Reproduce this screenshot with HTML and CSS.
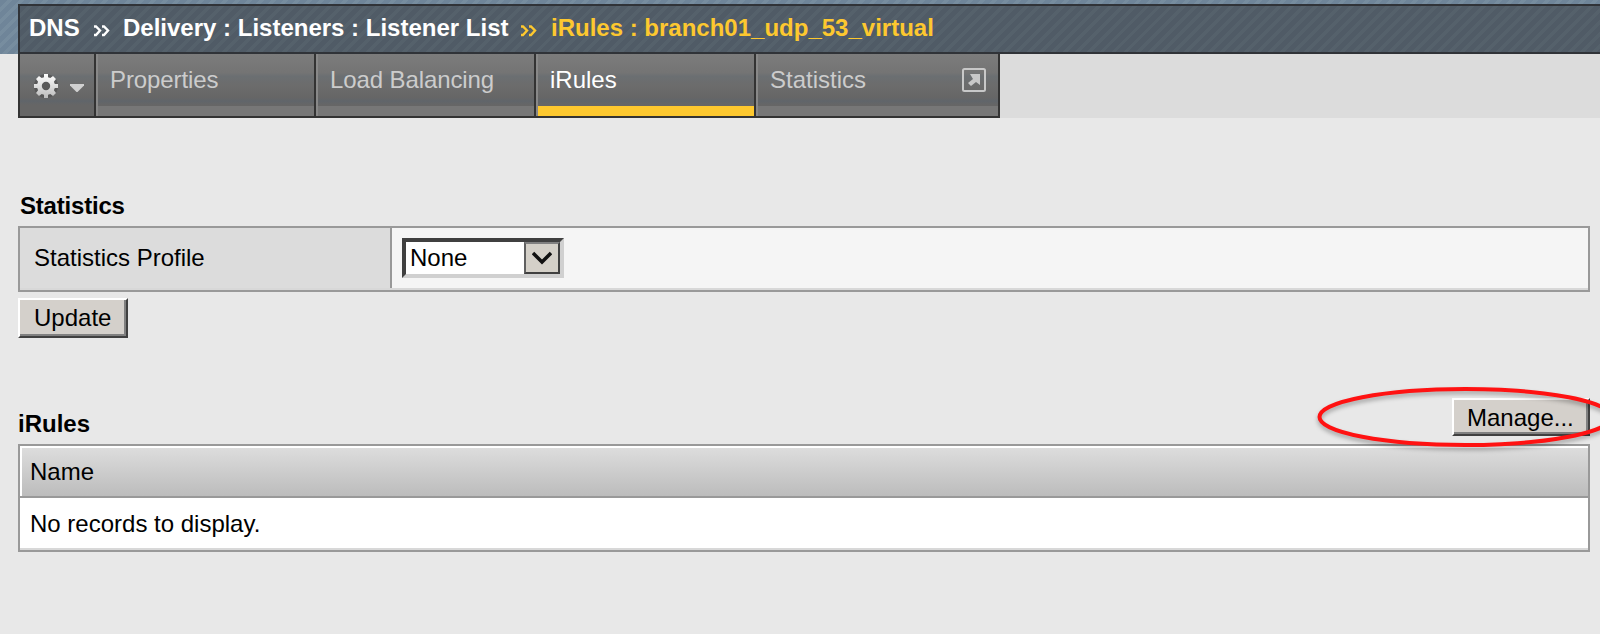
FILE: index.html
```html
<!DOCTYPE html>
<html lang="en">
<head>
<meta charset="utf-8">
<title>iRules : branch01_udp_53_virtual</title>
<link rel="stylesheet" href="styles.css">
</head>
<body>
<header class="masthead">
  <div class="crumbs">
    <span class="crumb dns">DNS</span>
    <svg class="chev" viewBox="0 0 16 12"><path d="M0 1.500h2l4 4-4 4.500H0M8 1.500h2l4 4-4 4.500H8"/></svg>
    <span class="crumb path">Delivery : Listeners : Listener List</span>
    <svg class="chev current" viewBox="0 0 16 12"><path d="M0 1.500h2l4 4-4 4.500H0M8 1.500h2l4 4-4 4.500H8"/></svg>
    <span class="crumb current name">iRules : branch01_udp_53_virtual</span>
  </div>
</header>
<div class="tabbar">
  <nav class="tabs">
    <div class="gear">
      <svg class="cog" viewBox="0 0 28 28">
        <defs><linearGradient id="cogfill" x1="0" y1="0" x2="0" y2="1"><stop offset="0" stop-color="#fff"/><stop offset="1" stop-color="#bbb"/></linearGradient></defs>
        <circle cx="14" cy="14" r="12" fill="#4c4c4c" opacity=".6"/>
        <g fill="url(#cogfill)">
          <path fill-rule="evenodd" d="M12 2h4v3.200l2.300.9L21 4l3 3-2.100 2.700.9 2.300H26v4h-3.200l-.9 2.300L24 21l-3 3-2.700-2.100-2.300.9V26h-4v-3.200l-2.300-.9L7 24l-3-3 2.100-2.700-.9-2.300H2v-4h3.200l.9-2.300L4 7l3-3 2.700 2.100 2.300-.9zM14 9.800a4.200 4.200 0 1 0 0 8.400a4.200 4.200 0 1 0 0-8.400z"/>
        </g>
      </svg>
      <svg class="caret" viewBox="0 0 14 8"><path d="M0 0h14v1.500L7.500 8h-1L0 1.500z"/></svg>
    </div>
    <div class="tab"><span class="t-prop">Properties</span></div>
    <div class="tab"><span class="t-load">Load Balancing</span></div>
    <div class="tab active"><span class="t-rules">iRules</span></div>
    <div class="tab last"><span class="t-stat">Statistics</span>
      <svg class="popout" viewBox="0 0 24 24"><rect x="1" y="1" width="22" height="22" rx="1.500"/><path d="M8 6h10v11l-4-3-5 4-3-3 5-4z"/></svg>
    </div>
  </nav>
</div>
<main class="content">
  <h2 class="title h-stat">Statistics</h2>
  <section class="form">
    <div class="label"><span class="l-profile">Statistics Profile</span></div>
    <div class="field">
      <div class="select"><span class="value">None</span>
        <span class="drop"><svg viewBox="0 0 20 14"><path d="M1 2l9 9 9-9"/></svg></span>
      </div>
    </div>
  </section>
  <div class="button update"><span>Update</span></div>
  <div class="listhead">
    <h2 class="title h-rules">iRules</h2>
    <div class="manage-wrap">
      <div class="button manage"><span>Manage...</span></div>
      <svg class="mark" viewBox="0 0 300 70"><ellipse cx="149.500" cy="34" rx="146" ry="28"/></svg>
    </div>
  </div>
  <section class="list">
    <div class="thead"><span>Name</span></div>
    <div class="row"><span>No records to display.</span></div>
  </section>
</main>
</body>
</html>
```
FILE: styles.css
```css
* { box-sizing: border-box; }
body {
  margin: 0;
  height: 634px;
  overflow: hidden;
  background: #e8e8e8;
  color: #000;
  font: 24px/28px "Liberation Sans", Arial, sans-serif;
  white-space: nowrap;
}
svg { display: block; flex: none; }
.masthead {
  height: 54px;
  padding: 4px 0 0 18px;
  background: repeating-linear-gradient(135deg, #6f8599 0 5px, #778d9f 5px 8.500px);
}
.crumbs {
  height: 50px;
  display: flex;
  padding: 8px 0 0 9px;
  border: 2px solid #303338;
  border-right: 0;
  background: repeating-linear-gradient(135deg, #505b66 0 5px, #55616b 5px 8.500px);
  color: #fff;
  font-weight: bold;
}
.crumb { flex: none; }
.dns { width: 65px; }
.path { width: 398px; margin-left: 13px; }
.name { margin-left: 14px; }
.crumb.current { color: #fdc82f; }
.chev { width: 16px; height: 12px; margin-top: 11px; fill: none; stroke: #fff; stroke-width: 2.400; }
.chev.current { stroke: #fdc82f; }
.tabbar { height: 64px; padding-left: 18px; background: linear-gradient(90deg, #e8e8e8 18px, #dcdcdc 18px); }
.tabs {
  width: 982px;
  height: 64px;
  display: flex;
  border: solid #333;
  border-width: 0 2px 2px;
  background: linear-gradient(#7c7c7c, #747474 30%, #6b6f72 36%, #6c6c6c 50%, #666 70%, #60656a 76%, #666 82%);
  color: #ccc;
}
.gear { width: 76px; display: flex; border-right: 2px solid #333; padding: 18px 0 0 12px; }
.cog { width: 28px; height: 28px; }
.caret { width: 14px; height: 8px; margin: 12px 0 0 10px; fill: #d0d0d0; }
.tab {
  width: 220px;
  display: flex;
  justify-content: space-between;
  padding: 12px 12px 0;
  border-left: 2px solid #888;
  border-right: 2px solid #333;
  background: linear-gradient(transparent 52px, #777 52px);
}
.t-prop, .t-load { letter-spacing: -0.1px; }
.active { color: #fff; background: linear-gradient(transparent 52px, #fdc82f 52px); }
.last { width: 242px; border-right: 0; }
.popout { width: 24px; height: 24px; margin-top: 2px; fill: #c8c8c8; }
.popout rect { fill: none; stroke: #c8c8c8; stroke-width: 2; }
.content { padding: 70px 10px 0 18px; }
.title { margin: 0; font: bold 24px/28px "Liberation Sans", Arial, sans-serif; }
.h-stat { height: 38px; padding: 4px 0 0 2px; letter-spacing: -0.2px; }
.form { height: 66px; display: flex; border: 2px solid #999; background: #f5f5f5; box-shadow: inset 0 -2px #d8d8d8; }
.label { width: 372px; height: 60px; padding: 16px 0 0 14px; border-right: 2px solid #999; background: #dcdcdc; }
.field { padding: 10px; }
.select {
  width: 162px;
  height: 40px;
  display: flex;
  justify-content: space-between;
  border: 4px solid;
  border-color: #404040 #d0d0d0 #d0d0d0 #404040;
  background: #fff;
}
.value { padding: 2px 0 0 4px; }
.drop { width: 36px; height: 32px; border: 2px solid; border-color: #808080 #404040 #404040 #606060; background: #d4d0c8; padding: 7px 0 0 6px; }
.drop svg { width: 20px; height: 14px; fill: none; stroke: #111; stroke-width: 3.500; }
.button {
  background: #d4d0cb;
  border: 2px solid;
  border-color: #fff #404040 #404040 #fff;
  box-shadow: inset -2px -2px #808080;
}
.update { width: 110px; height: 40px; margin-top: 6px; padding: 4px 0 0 14px; }
.listhead { height: 106px; display: flex; justify-content: space-between; padding-top: 60px; }
.h-rules { padding-top: 12px; }
.manage-wrap { position: relative; }
.manage { width: 138px; height: 38px; padding: 4px 0 0 13px; }
.mark { position: absolute; left: -136px; top: -15px; width: 300px; height: 70px; fill: none; stroke: #ff1212; stroke-width: 4; filter: drop-shadow(0 3px 2px rgba(0,0,0,.3)); }
.list { height: 108px; border: 2px solid #999; background: #fff; box-shadow: inset 0 -2px #d8d8d8; }
.thead { height: 52px; padding: 12px 0 0 10px; border-bottom: 2px solid #999; background: linear-gradient(#dedede, #bcbcbc); box-shadow: inset 2px 2px #fff; }
.row { padding: 12px 0 0 10px; }
```
